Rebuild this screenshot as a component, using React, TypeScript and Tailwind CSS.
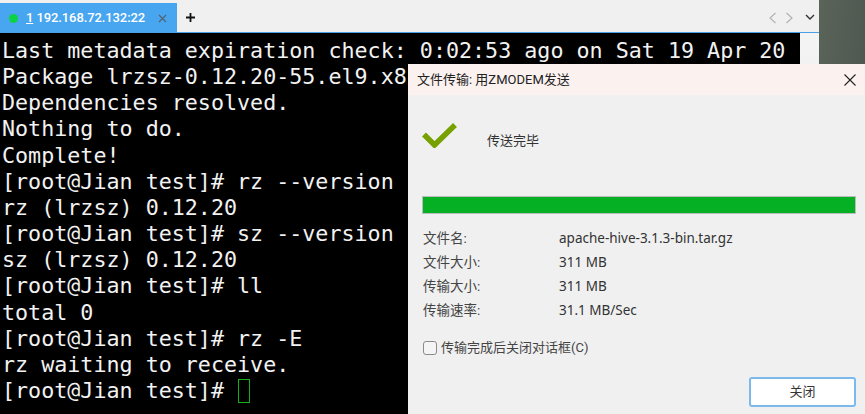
import React from 'react';

const lines = [
  'Last metadata expiration check: 0:02:53 ago on Sat 19 Apr 20',
  'Package lrzsz-0.12.20-55.el9.x8',
  'Dependencies resolved.',
  'Nothing to do.',
  'Complete!',
  '[root@Jian test]# rz --version',
  'rz (lrzsz) 0.12.20',
  '[root@Jian test]# sz --version',
  'sz (lrzsz) 0.12.20',
  '[root@Jian test]# ll',
  'total 0',
  '[root@Jian test]# rz -E',
  'rz waiting to receive.',
];

const info = [
  ['文件名:', 'apache-hive-3.1.3-bin.tar.gz'],
  ['文件大小:', '311 MB'],
  ['传输大小:', '311 MB'],
  ['传输速率:', '31.1 MB/Sec'],
];

const uiFont = "font-['Roboto','Noto_Sans_CJK_SC',sans-serif]";

export default function App() {
  return (
    <div className={`relative flex w-[865px] h-[414px] overflow-hidden bg-[#4f5a50] ${uiFont}`}>
      {/* Terminal window */}
      <div className="flex flex-col w-[819px] h-full bg-[#f0f0f0]">
        <div className="flex h-[33px] shrink-0 pt-[3px] border-b border-[#4a9fe6] bg-[#f0f0f0]">
          <div className="flex items-center w-[177px] bg-[#48a5ef] pl-[9px] pt-[1px] text-white">
            <span className="w-[9px] h-[9px] rounded-full bg-[#0ed145]" />
            <span className="ml-[8px] text-[13px] tracking-[-0.1px] font-medium"><span className="underline">1</span> 192.168.72.132:22</span>
            <svg className="ml-[13px] w-[9px] h-[9px]" viewBox="0 0 9 9" stroke="#54606c" strokeWidth="1.1" fill="none">
              <path d="M1 1l7 7M8 1l-7 7" />
            </svg>
          </div>
          <div className="flex items-center ml-[9px]">
            <svg className="w-[9px] h-[9px]" viewBox="0 0 9 9" stroke="#111" strokeWidth="1.8" fill="none">
              <path d="M4.5 0v9M0 4.5h9" />
            </svg>
          </div>
          <div className="flex items-center gap-[6px] ml-auto mr-[4px]">
            <svg className="w-[10px] h-[12px]" viewBox="0 0 10 12" stroke="#b0b0b0" strokeWidth="1.1" fill="none">
              <path d="M7.5 1L2 6l5.5 5" />
            </svg>
            <svg className="w-[10px] h-[12px]" viewBox="0 0 10 12" stroke="#b0b0b0" strokeWidth="1.1" fill="none">
              <path d="M2.5 1L8 6l-5.5 5" />
            </svg>
            <svg className="ml-[5px] w-[10px] h-[7px]" viewBox="0 0 10 7" stroke="#333" strokeWidth="1.4" fill="none">
              <path d="M1 1l4 4 4-4" />
            </svg>
          </div>
        </div>
        <div className="flex flex-1 min-h-0">
          <div className="flex-1 min-w-0 bg-black pt-[5px] text-[#f2f2f2] font-['DejaVu_Sans_Mono',monospace] text-[21.7px] leading-[26.15px] whitespace-pre overflow-hidden">
            {lines.map((l, i) => (
              <div key={i} className="pl-[2px]">{l}</div>
            ))}
            <div className="flex items-center pl-[2px]">
              <span>{'[root@Jian test]# '}</span>
              <span className="shrink-0 ml-[1px] w-[12px] h-[24px] outline-1 outline-solid -outline-offset-1 outline-[#12b012]" />
            </div>
          </div>
          <div className="w-[19px] bg-gradient-to-b from-[#f4f4f4] to-[#dcdcdc]" />
        </div>
      </div>

      {/* Wallpaper behind */}
      <div className="flex-1 bg-gradient-to-br from-[#5a6459] to-[#46504a]" />

      {/* Transfer dialog */}
      <div className="absolute left-[408px] top-[64px] right-0 bottom-0 flex flex-col bg-[#f0f0f0] rounded-tl-[5px] text-[13px] text-[#333]">
        <div className="flex items-center h-[31px] bg-[#fbf2f0] pl-[9px] pr-[9px] text-[13px] text-[#222]">
          <span>文件传输: 用ZMODEM发送</span>
          <svg className="ml-auto w-[12px] h-[12px]" viewBox="0 0 12 12" stroke="#222" strokeWidth="1.1" fill="none">
            <path d="M.5.5l11 11M11.5.5l-11 11" />
          </svg>
        </div>

        <div className="flex items-start h-[101px] pl-[14px] pt-[28px]">
          <svg className="w-[35px] h-[25px]" viewBox="0 0 35 25" fill="none" stroke="#76a100" strokeWidth="5.5">
            <path d="M2 11.5L12.5 22 33 2" />
          </svg>
          <span className="ml-[30px] mt-[8px] leading-[20px] text-[#333]">传送完毕</span>
        </div>

        <div className="ml-[14px] mr-[9px] h-[18px] bg-[#06b025] border border-[#bcbcbc]" />

        <div className="mt-[12px] pl-[15px] flex flex-col">
          {info.map(([k, v]) => (
            <div key={k} className="flex items-center h-[24px]">
              <span className="w-[136px] text-[13.5px] text-[#444]">{k}</span>
              <span className="text-[13.5px] font-['Noto_Sans',sans-serif] text-[#333]">{v}</span>
            </div>
          ))}
        </div>

        <label className="flex items-center mt-[14px] pl-[15px] h-[24px] text-[#444]">
          <span className="w-[14px] h-[14px] rounded-[3px] border border-[#8a8a8a] bg-[#f4f4f4]" />
          <span className="ml-[4px]">传输完成后关闭对话框(C)</span>
        </label>

        <div className="flex justify-end mt-auto mb-[7px] mr-[9px]">
          <button className="w-[107px] h-[30px] rounded-[3px] border-2 border-[#7cb9ec] bg-white text-[13px] text-[#333]">关闭</button>
        </div>
      </div>
    </div>
  );
}
